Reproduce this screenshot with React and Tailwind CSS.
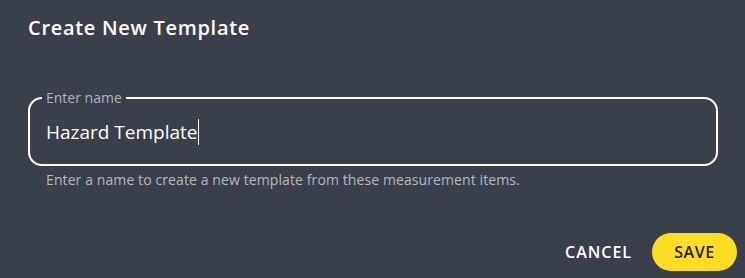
export default function App() {
  return (
    <div className="w-[745px] h-[278px] bg-[#3a404a] flex flex-col font-['Open_Sans',sans-serif]">
      <div className="pl-[28px] pt-[16px] h-[56px]">
        <h2 className="text-[20px] font-semibold text-white leading-[24px] tracking-[0.7px]">
          Create New Template
        </h2>
      </div>
      <div className="pl-[28px] pr-[27px] pt-[35px]">
        <fieldset className="h-[75px] border-2 border-white rounded-[14px] pl-[12px] pr-[12px]">
          <legend className="px-[4px] text-[14px] leading-[14px] text-[#aeb3ba]">
            Enter name
          </legend>
          <div className="flex items-center h-[44px] mt-[5px] pl-[4px] text-[19px] text-white">
            <span>Hazard Template</span>
            <span className="inline-block w-[1px] h-[26px] bg-white"></span>
          </div>
        </fieldset>
        <p className="mt-[4px] pl-[18px] text-[14px] leading-[20px] tracking-[0.1px] text-[#b3b8bf]">
          Enter a name to create a new template from these measurement items.
        </p>
      </div>
      <div className="flex-1 flex items-end justify-end gap-[8px] pr-[8px] pb-[7px]">
        <button className="h-[38px] px-[12px] rounded-full text-white text-[16px] font-semibold tracking-[1px]">CANCEL</button>
        <button className="h-[38px] w-[85px] rounded-full bg-[#fddc24] text-[#1f2228] text-[16px] font-semibold tracking-[0.6px]">SAVE</button>
      </div>
    </div>
  );
}
